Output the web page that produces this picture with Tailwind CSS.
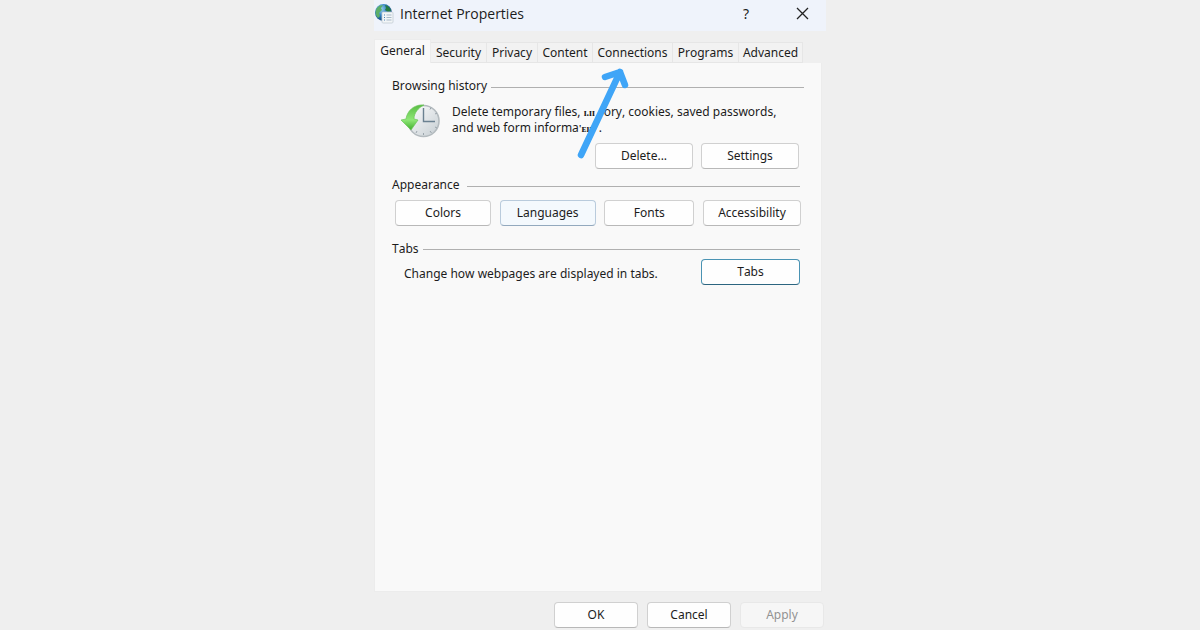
<!DOCTYPE html>
<html lang="en">

<head>
    <meta charset="UTF-8">
    <meta name="viewport" content="width=device-width, initial-scale=1.0">
    <script src="https://cdn.jsdelivr.net/npm/@tailwindcss/browser@4"></script>
    <title>Internet Properties</title>
</head>

<body class="bg-[#efefef] font-['Noto_Sans',sans-serif] [font-kerning:none] text-[12px] leading-4 text-[#1c1c1c]">

    <main class="relative mx-auto flex min-h-screen w-full max-w-[452px] flex-col">

        <!-- title bar -->
        <header class="flex h-[31px] items-center bg-[#eff3fb] pb-1">
            <svg class="h-5 w-5 shrink-0" viewBox="0 0 20 20" aria-hidden="true">
                <defs>
                    <radialGradient id="globe" cx="35%" cy="30%" r="75%">
                        <stop offset="0" stop-color="#9fd4f2" />
                        <stop offset="0.5" stop-color="#2f7fc0" />
                        <stop offset="1" stop-color="#12406f" />
                    </radialGradient>
                </defs>
                <circle cx="9.500" cy="8.500" r="8.5" fill="url(#globe)" />
                <path d="M3 4C5 1.500 8 1 9 1.500L7 4L8 6L5 9L6 12L4 14C1 11 1 7 3 4Z" fill="#5cae68" />
                <path d="M11 1C14 1.500 16.500 4 17 7L14 8L11 6L12 4Z" fill="#277b43" />
                <rect x="8" y="8" width="11" height="11" rx="1" fill="#f2f5f7" stroke="#c3ccd4" stroke-width="0.8" />
                <path d="M10 11h1M10 13.500h1M10 16h1" stroke="#4b82b5" />
                <path d="M12.500 11h5M12.500 13.500h5M12.500 16h5" stroke="#a9bac9" />
            </svg>
            <h1 class="ml-[6px] flex-1 font-['Open_Sans',sans-serif] text-[14px]">Internet Properties</h1>
            <button type="button" aria-label="Help" class="w-8 text-[14px]">?</button>
            <button type="button" aria-label="Close" class="ml-6 mr-2 flex w-8 justify-center">
                <svg class="h-[13px] w-[13px]" viewBox="0 0 13 13" aria-hidden="true">
                    <path d="M1 1L12 12M12 1L1 12" stroke="#222" stroke-width="1.300" />
                </svg>
            </button>
        </header>

        <!-- tabs -->
        <nav class="mt-2 flex h-6 items-end" role="tablist">
            <button type="button" role="tab" aria-selected="true" class="h-6 w-[57px] border border-b-0 border-[#ececec] bg-[#f9f9f9] pb-[2px]">General</button>
            <button type="button" role="tab" class="h-[21px] w-[56px] border-y border-r border-[#e6e6e6] bg-[#f2f2f2]">Security</button>
            <button type="button" role="tab" class="h-[21px] w-[51px] border-y border-r border-[#e6e6e6] bg-[#f2f2f2]">Privacy</button>
            <button type="button" role="tab" class="h-[21px] w-[55px] border-y border-r border-[#e6e6e6] bg-[#f2f2f2]">Content</button>
            <button type="button" role="tab" class="h-[21px] w-[80px] border-y border-r border-[#e6e6e6] bg-[#f2f2f2]">Connections</button>
            <button type="button" role="tab" class="h-[21px] w-[66px] border-y border-r border-[#e6e6e6] bg-[#f2f2f2]">Programs</button>
            <button type="button" role="tab" class="h-[21px] w-[64px] border-y border-r border-[#e6e6e6] bg-[#f2f2f2]">Advanced</button>
        </nav>

        <!-- general panel -->
        <div role="tabpanel" class="mr-1 flex-1 border border-t-0 border-[#ececec] bg-[#f9f9f9] pl-[17px] pr-[21px] pt-[15px]">

            <section>
                <div class="-mr-1 flex items-center gap-1">
                    <h2>Browsing history</h2>
                    <div class="mt-[2px] h-px flex-1 bg-[#b0b0b0]"></div>
                </div>
                <div class="mt-[10px] flex pl-[9px]">
                    <svg class="h-9 w-10 shrink-0" viewBox="0 0 40 36" aria-hidden="true">
                        <defs>
                            <linearGradient id="face" x1="0" y1="0" x2="1" y2="1">
                                <stop offset="0" stop-color="#ffffff" />
                                <stop offset="1" stop-color="#c5cdd2" />
                            </linearGradient>
                            <linearGradient id="arrow" x1="0" y1="0" x2="0" y2="1">
                                <stop offset="0" stop-color="#58bd43" />
                                <stop offset="0.6" stop-color="#8fe777" />
                                <stop offset="1" stop-color="#3fae2c" />
                            </linearGradient>
                        </defs>
                        <circle cx="22.500" cy="17" r="15.500" fill="url(#face)" stroke="#b4bbbf" stroke-width="1.600" />
                        <path d="M22.500 29v2M29 27l1.500 2M34 23l2 1M34 10l2-1M29 5.500l1-2M16 27l-1 2M11 23l-2 1" stroke="#9aa4ab" />
                        <path d="M22.500 4v13.500H34" fill="none" stroke="#6b8191" stroke-width="1.400" />
                        <path d="M23 1C13 0 6 7 5 15L0 16L10 26L17 16L13 15C13 9 17 4 23 1Z" fill="url(#arrow)" stroke="#6cc45a" stroke-width="0.700" />
                    </svg>
                    <p class="ml-[11px] whitespace-nowrap">
                        Delete temporary files, <span class="inline-block w-5 font-['Liberation_Serif',serif] text-[10px] leading-3 font-bold">ɪ.ɪɪ</span>ory, cookies, saved passwords,<br>
                        and web form informa<span class="inline-block w-5 font-['Liberation_Serif',serif] text-[10px] leading-3 font-bold">'ᴇıɪɪ</span>.
                    </p>
                </div>
                <div class="mr-px mt-[3px] flex justify-end gap-2">
                    <button type="button" class="h-[26px] w-[98px] rounded border border-[#d0d0d0] border-b-[#b8b8b8] bg-[#fefefe]">Delete...</button>
                    <button type="button" class="h-[26px] w-[98px] rounded border border-[#d0d0d0] border-b-[#b8b8b8] bg-[#fefefe]">Settings</button>
                </div>
            </section>

            <section class="mt-2">
                <div class="flex items-center gap-[7px]">
                    <h2>Appearance</h2>
                    <div class="mt-[2px] h-px flex-1 bg-[#b0b0b0]"></div>
                </div>
                <div class="-mr-px mt-[7px] flex justify-between pl-[3px]">
                    <button type="button" class="h-[26px] w-[96px] rounded border border-[#d0d0d0] border-b-[#b8b8b8] bg-[#fefefe]">Colors</button>
                    <button type="button" class="h-[26px] w-[96px] rounded border border-[#b9cbdc] border-b-[#93a9be] bg-[#f4f9fd]">Languages</button>
                    <button type="button" class="h-[26px] w-[90px] rounded border border-[#d0d0d0] border-b-[#b8b8b8] bg-[#fefefe]">Fonts</button>
                    <button type="button" class="h-[26px] w-[98px] rounded border border-[#d0d0d0] border-b-[#b8b8b8] bg-[#fefefe]">Accessibility</button>
                </div>
            </section>

            <section class="mt-[15px]">
                <div class="flex items-center gap-1">
                    <h2>Tabs</h2>
                    <div class="h-px flex-1 bg-[#b0b0b0]"></div>
                </div>
                <div class="mt-[2px] flex items-center justify-between pl-3">
                    <p class="mt-1">Change how webpages are displayed in tabs.</p>
                    <button type="button" class="h-[26px] w-[99px] rounded border border-[#4a93b3] border-b-[#2c6580] bg-[#fefefe]">Tabs</button>
                </div>
            </section>
        </div>

        <!-- dialog buttons -->
        <footer class="flex justify-end gap-[9px] pb-[2px] pr-[2px] pt-[10px]">
            <button type="button" class="h-[26px] w-[84px] rounded border border-[#d0d0d0] border-b-[#b8b8b8] bg-[#fefefe]">OK</button>
            <button type="button" class="h-[26px] w-[84px] rounded border border-[#d0d0d0] border-b-[#b8b8b8] bg-[#fefefe]">Cancel</button>
            <button type="button" disabled class="h-[26px] w-[84px] rounded border border-[#e8e8e8] bg-[#f6f6f6] text-[#929292]">Apply</button>
        </footer>

        <!-- pointer to the Connections tab -->
        <svg class="pointer-events-none absolute left-[200px] top-[64px] h-[98px] w-[60px]" viewBox="0 0 60 98" fill="none" stroke="#3fa5f7" stroke-width="6.500" stroke-linecap="round" stroke-linejoin="round" aria-hidden="true">
            <path d="M7 91L46 8M31 13L46 8L51 21" />
        </svg>
    </main>

</body>

</html>
